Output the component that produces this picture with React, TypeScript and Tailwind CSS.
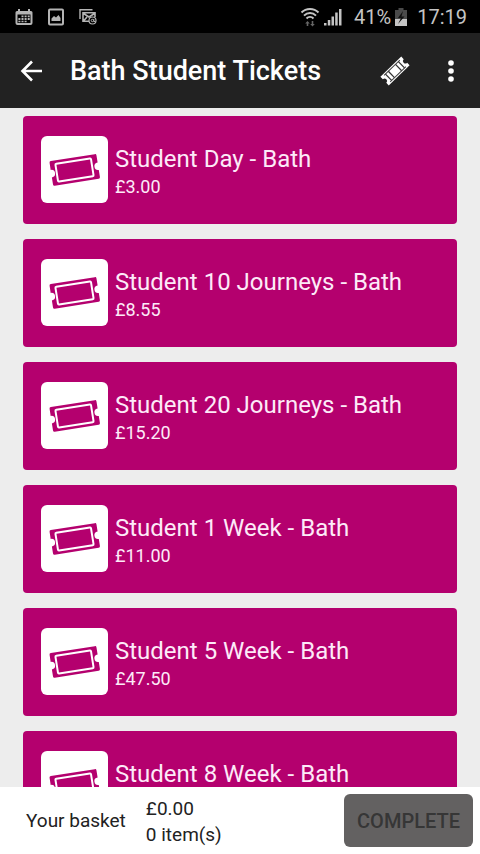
const tickets = [
  { name: 'Student Day - Bath', price: '£3.00' },
  { name: 'Student 10 Journeys - Bath', price: '£8.55' },
  { name: 'Student 20 Journeys - Bath', price: '£15.20' },
  { name: 'Student 1 Week - Bath', price: '£11.00' },
  { name: 'Student 5 Week - Bath', price: '£47.50' },
  { name: 'Student 8 Week - Bath', price: '' },
];

function CalendarIcon() {
  return (
    <svg width="18" height="18" viewBox="0 0 18 18" aria-hidden="true">
      <path
        fill="#b4b4b4"
        fillRule="evenodd"
        d="M3 1h2v2h8V1h2v2h1a1.500 1.500 0 0 1 1.500 1.500V15a2 2 0 0 1-2 2h-13a2 2 0 0 1-2-2V4.500A1.500 1.500 0 0 1 2 3h1zM2.500 6.500v8.500h13V6.500z"
      />
      <path
        fill="#b4b4b4"
        d="M6.500 7.500h2v1.800h-2zM9.600 7.500h2v1.800h-2zM12.700 7.500h2v1.800h-2zM3.400 10.100h2v1.800h-2zM6.500 10.100h2v1.800h-2zM9.600 10.100h2v1.800h-2zM12.700 10.100h2v1.800h-2zM3.400 12.700h2v1.500h-2zM6.500 12.700h2v1.500h-2zM9.600 12.700h2v1.500h-2z"
      />
    </svg>
  );
}

function PictureIcon() {
  return (
    <svg width="16" height="18" viewBox="0 0 16 18" aria-hidden="true">
      <rect x="1" y="1.500" width="14" height="15" rx="1" fill="none" stroke="#b4b4b4" strokeWidth="2" />
      <path fill="#b4b4b4" d="M3.500 13v-2.500L6 8l2 1.500L10.500 7l2 3v3z" />
    </svg>
  );
}

function MailIcon() {
  return (
    <svg width="18" height="18" viewBox="0 0 18 18" aria-hidden="true">
      <path fill="none" stroke="#b4b4b4" strokeWidth="1.400" d="M1 11V1.700h12.500" />
      <path fill="none" stroke="#b4b4b4" strokeWidth="1.600" d="M10 13.200H4V4.800h12V9M4.500 5.500L10 9l5.500-3.500M4.500 13l3.500-4" />
      <circle cx="13.500" cy="12.500" r="3.500" fill="#000" stroke="#b4b4b4" strokeWidth="1.200" />
      <circle cx="13.400" cy="12.500" r="1.200" fill="none" stroke="#b4b4b4" strokeWidth="1" />
      <path fill="none" stroke="#b4b4b4" strokeWidth="1" d="M14.800 11v2.500h1.700" />
    </svg>
  );
}

function WifiIcon() {
  return (
    <svg width="20" height="20" viewBox="0 0 20 20" aria-hidden="true">
      <g fill="none" stroke="#c4c4c4" strokeWidth="2">
        <path d="M1.500 5.500a12 12 0 0 1 17 0" />
        <path d="M4 8.600a8.500 8.500 0 0 1 12 0" />
        <path d="M6.500 11.500a5 5 0 0 1 7 0" />
      </g>
      <path fill="#666" d="M7.500 14l2.300 2.500H8.300V19H6.700v-2.500H5.200zM12.500 19.500L10.200 17h1.500v-3h1.600v3h1.500z" />
    </svg>
  );
}

function SignalIcon() {
  return (
    <svg width="18" height="18" viewBox="0 0 18 18" aria-hidden="true">
      <path fill="#c4c4c4" d="M0 15h2.500v2.500H0zM3.800 12h2.500v5.500H3.800zM7.500 8.500H10v9H7.500zM11.200 4.500h2.500v13h-2.500zM15 1h2.500v16.500H15z" />
    </svg>
  );
}

function BatteryIcon() {
  return (
    <svg width="12" height="20" viewBox="0 0 12 20" aria-hidden="true">
      <path fill="#4a4a4a" d="M3.500 1h5v2H12v9H0V3h3.500z" />
      <path fill="#c4c4c4" d="M0 12h12v7H0z" />
      <path fill="#111" d="M8 4L3 11h3l-3 6 6.500-7.500H6.500z" />
    </svg>
  );
}

function BackIcon() {
  return (
    <svg width="22" height="22" viewBox="0 0 22 22" aria-hidden="true">
      <path fill="none" stroke="#fff" strokeWidth="2.600" d="M12 1.500L2.500 11l9.500 9.500M2.500 11H22" />
    </svg>
  );
}

function WalletTicketIcon() {
  return (
    <svg width="32" height="32" viewBox="0 0 32 32" aria-hidden="true">
      <g transform="rotate(-44 16 16)">
        <path
          fill="#fff"
          d="M1.500 10h29v3.500a2.500 2.500 0 0 0 0 5V22h-29v-3.500a2.500 2.500 0 0 0 0-5z"
        />
        <path stroke="#444" strokeWidth="1" fill="none" d="M5 11.600h22M5 20.400h22" />
        <path stroke="#333" strokeWidth="1.300" fill="none" d="M7 11.600v8.800M11 11.600v8.800M21 11.600v8.800M25 11.600v8.800" />
      </g>
    </svg>
  );
}

function MoreIcon() {
  return (
    <svg width="6" height="24" viewBox="0 0 6 24" fill="#fff" aria-hidden="true">
      <circle cx="3" cy="4" r="2.800" />
      <circle cx="3" cy="12" r="2.800" />
      <circle cx="3" cy="20" r="2.800" />
    </svg>
  );
}

function TicketIcon() {
  return (
    <svg width="67" height="67" viewBox="0 0 67 67" aria-hidden="true">
      <g transform="rotate(-9 33.500 34)">
        <path
          fill="#b4006e"
          d="M11.500 21.500h44.500a1.500 1.500 0 0 1 1.500 1.500v7.200a3.800 3.800 0 0 0 0 7.600v7.200a1.500 1.500 0 0 1-1.500 1.500h-44.500a1.500 1.500 0 0 1-1.500-1.500v-7.200a3.800 3.800 0 0 0 0-7.600v-7.200a1.500 1.500 0 0 1 1.500-1.500z"
        />
        <rect x="15.500" y="25" width="36" height="18" rx="1" fill="none" stroke="#fff" strokeWidth="2" />
      </g>
    </svg>
  );
}

function StatusBar() {
  return (
    <div className="flex h-[33px] shrink-0 items-center justify-between bg-black pr-[13px] pl-[15px]">
      <div className="flex items-center gap-[15px]">
        <CalendarIcon />
        <PictureIcon />
        <MailIcon />
      </div>
      <div className="flex items-center text-xl text-[#c4c4c4]">
        <WifiIcon />
        <span className="ml-1">
          <SignalIcon />
        </span>
        <span className="ml-3">41%</span>
        <span className="ml-1">
          <BatteryIcon />
        </span>
        <span className="ml-[10px]">17:19</span>
      </div>
    </div>
  );
}

function Header() {
  return (
    <header className="flex h-[75px] shrink-0 items-center bg-[#222222] pr-[26px] pl-5 text-white">
      <button type="button" aria-label="Back">
        <BackIcon />
      </button>
      <h1 className="ml-7 flex-1 pt-0.5 text-[27px] font-medium">Bath Student Tickets</h1>
      <button type="button" aria-label="My tickets">
        <WalletTicketIcon />
      </button>
      <button type="button" aria-label="More options" className="ml-[37px]">
        <MoreIcon />
      </button>
    </header>
  );
}

function TicketCard({ name, price }: { name: string; price: string }) {
  return (
    <button
      type="button"
      className="flex h-[108px] w-full shrink-0 items-center gap-[7px] rounded bg-[#b4006e] px-[18px] pb-0.5 text-left text-[#fdeaf8]"
    >
      <span className="rounded-md bg-white">
        <TicketIcon />
      </span>
      <span className="flex flex-col pt-1">
        <span className="text-2xl leading-8">{name}</span>
        <span className="h-6 text-lg leading-6">{price}</span>
      </span>
    </button>
  );
}

function Basket() {
  return (
    <footer className="flex h-[67px] shrink-0 items-center bg-white pr-[7px] pl-[26px] text-[19px] text-[#222222]">
      <span className="pt-0.5">Your basket</span>
      <div className="ml-5 flex-1 pt-0.5 leading-[26px]">
        <p>£0.00</p>
        <p>0 item(s)</p>
      </div>
      <button
        type="button"
        disabled
        className="h-[53px] w-[129px] rounded-md bg-[#636161] text-xl font-medium text-[#363636]"
      >
        COMPLETE
      </button>
    </footer>
  );
}

export default function App() {
  return (
    <div className="flex h-screen flex-col bg-[#ededed] font-[Roboto,sans-serif]">
      <StatusBar />
      <Header />
      <main className="flex min-h-0 flex-1 flex-col gap-[15px] overflow-y-auto px-[23px] pt-2 [scrollbar-width:none]">
        {tickets.map((ticket) => (
          <TicketCard key={ticket.name} name={ticket.name} price={ticket.price} />
        ))}
      </main>
      <Basket />
    </div>
  );
}
